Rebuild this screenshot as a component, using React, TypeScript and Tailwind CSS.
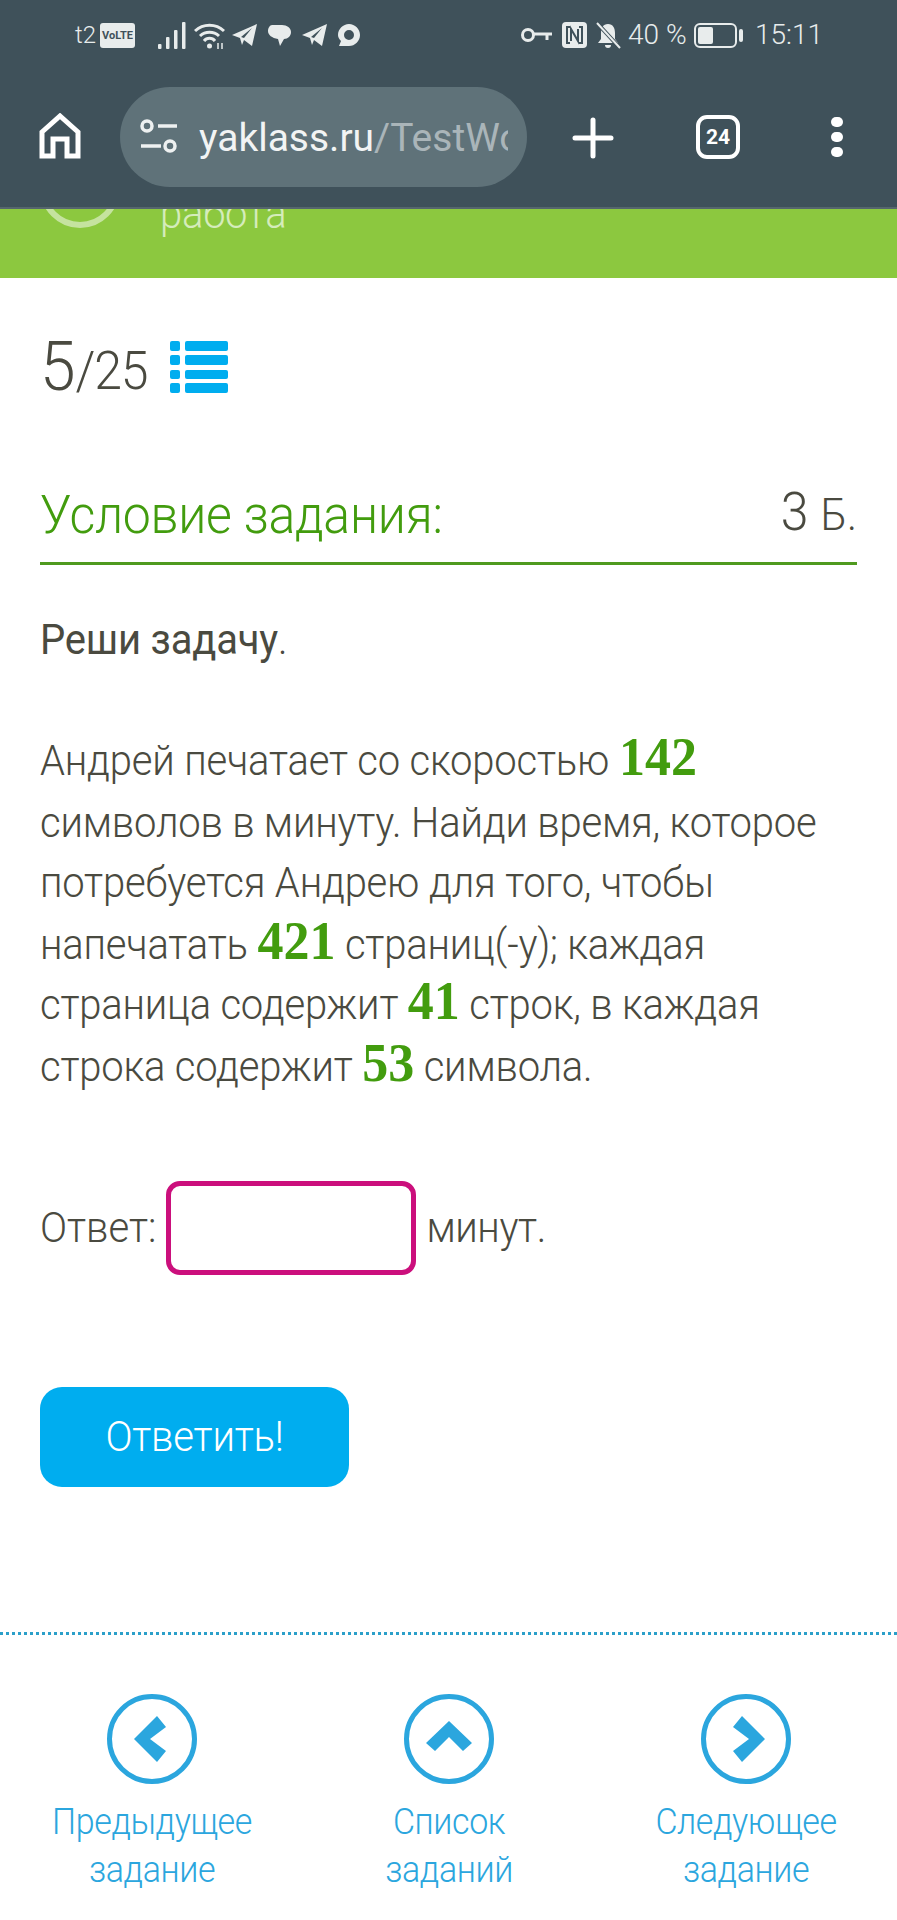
import React from 'react';

const Num = ({ children }: { children: React.ReactNode }) => (
  <span className="font-['Liberation_Serif',serif] font-bold text-[52px] tracking-normal leading-[0px] text-[#429c0e]">{children}</span>
);

function Telegram({ className }: { className?: string }) {
  return (
    <svg width="25" height="22" viewBox="0 0 25 22" fill="currentColor" className={className}>
      <path d="M25 0 20 22 12 16 10 21 8 14 0 11zM20 4 9 13l3 1z" fillRule="evenodd" />
    </svg>
  );
}

function StatusBar() {
  return (
    <div className="h-[69px] flex items-center pl-[75px] pt-[1px] text-[#e8ecec]">
      <span className="w-[20px] text-[24px] font-light leading-none">t2</span>
      <span className="ml-[5px] w-[35px] h-[25px] rounded-[3px] bg-[#e8ecec] text-[#3f515a] text-[11px] font-bold flex items-center justify-center leading-none">VoLTE</span>
      <svg width="28" height="27" viewBox="0 0 28 27" fill="currentColor" className="ml-[23px]">
        <rect x="0" y="22" width="3.5" height="5" rx="1" />
        <rect x="8" y="15" width="3.5" height="12" rx="1" />
        <rect x="16" y="8" width="3.5" height="19" rx="1" />
        <rect x="24" y="0" width="3.5" height="27" rx="1" />
      </svg>
      <svg width="31" height="27" viewBox="0 0 31 27" fill="none" stroke="currentColor" strokeWidth="3" className="ml-[8px]">
        <path d="M1 9a21 21 0 0 1 29 0M6 14a14 14 0 0 1 19 0M10 19a7 7 0 0 1 11 0" />
        <circle cx="15.5" cy="24" r="2.5" fill="currentColor" stroke="none" />
        <path d="M24 21v6M28 21v6" strokeWidth="1.5" />
      </svg>
      <Telegram className="ml-[7px]" />
      <svg width="23" height="22" viewBox="0 0 23 22" fill="currentColor" className="ml-[11px]">
        <path d="M4 1h10c5 0 9 3 9 7s-3 7-7 7l-4 7-2-7C4 14 0 11 0 7c0-3 2-6 4-6z" />
      </svg>
      <Telegram className="ml-[11px]" />
      <svg width="22" height="22" viewBox="0 0 22 22" fill="currentColor" fillRule="evenodd" className="ml-[11px]">
        <path d="M11 0c6 0 11 5 11 11s-5 11-11 11H1l2-5C1 15 0 13 0 11 0 5 5 0 11 0zm0 6a5 5 0 1 0 0 10 5 5 0 0 0 0-10z" />
      </svg>

      <svg width="31" height="14" viewBox="0 0 31 14" fill="none" stroke="currentColor" strokeWidth="3" className="ml-[161px]">
        <circle cx="7" cy="7" r="5.5" />
        <path d="M13 6h18M26 6v6" />
      </svg>
      <span className="ml-[10px] w-[25px] h-[26px] rounded-[4px] bg-[#e8ecec] flex items-center justify-center">
        <svg width="19" height="22" viewBox="0 0 19 22" fill="none" stroke="#3f515a" strokeWidth="2"><path d="M5 3H2v16h3M14 3h3v16h-3M6 17V5l7 12V5" /></svg>
      </span>
      <svg width="25" height="27" viewBox="0 0 25 27" className="ml-[9px]" fill="currentColor">
        <path d="M12 2c5 0 7 4 7 9v6l3 4H2l3-4v-6c0-5 2-9 7-9zM9 23h6a3 3 0 0 1-6 0z" />
        <path d="M1 1l23 25" stroke="#3f515a" strokeWidth="4" />
        <path d="M1 1l23 25" stroke="currentColor" strokeWidth="2" />
      </svg>
      <span className="ml-[7px] w-[59px] text-[28px] font-light leading-none whitespace-nowrap">40 %</span>
      <span className="ml-[7px] w-[43px] h-[25px] rounded-[6px] border-2 border-[#e8ecec] p-[2px] flex">
        <span className="w-[15px] bg-[#e8ecec] rounded-[2px]" />
      </span>
      <span className="ml-[2px] w-[4px] h-[13px] bg-[#e8ecec] rounded-full" />
      <span className="ml-[12px] text-[28px] font-light leading-none whitespace-nowrap">15:11</span>
    </div>
  );
}

function BrowserBar() {
  return (
    <div className="h-[138px] flex items-start pl-[39px] pt-[18px]">
      <svg width="42" height="46" viewBox="0 0 42 46" fill="none" stroke="white" strokeWidth="5" className="mt-[26px] shrink-0">
        <path d="M3 43V19L21 3l18 16v24H28V26H14v17H3z" />
      </svg>
      <div className="ml-[39px] w-[407px] h-[100px] shrink-0 rounded-[50px] bg-[#5f7279] flex items-center pl-[20px] overflow-hidden">
        <svg width="38" height="38" viewBox="0 0 38 38" fill="none" stroke="#eef1f1" strokeWidth="3.5" className="shrink-0">
          <circle cx="7" cy="8" r="5" />
          <path d="M18 8h19M1 28h20" />
          <circle cx="30" cy="28" r="5" />
        </svg>
        <div className="ml-[21px] mt-[2px] w-[309px] overflow-hidden whitespace-nowrap text-[39px] leading-[48px] text-[#f2f4f4] font-normal">
          yaklass.ru<span className="text-[#aab5b9]">/TestWork</span>
        </div>
      </div>
      <svg width="42" height="42" viewBox="0 0 42 42" fill="none" stroke="white" strokeWidth="5" strokeLinecap="round" className="ml-[45px] mt-[30px] shrink-0">
        <path d="M21 3v36M3 21h36" />
      </svg>
      <div className="ml-[82px] mt-[28px] w-[44px] h-[44px] shrink-0 border-[4px] border-white rounded-[11px] flex items-center justify-center text-white text-[21px] font-bold leading-none">24</div>
      <div className="ml-[91px] mt-[30px] flex flex-col gap-[5px] shrink-0">
        <span className="w-[12px] h-[10px] bg-white rounded-full" />
        <span className="w-[12px] h-[10px] bg-white rounded-full" />
        <span className="w-[12px] h-[10px] bg-white rounded-full" />
      </div>
    </div>
  );
}

function NavItem({ dir, lines }: { dir: 'left' | 'up' | 'right'; lines: [string, string] }) {
  const arrow = {
    left: '27,45 50,22 59,33 43,45 59,57 50,68',
    up: '45,27 68,49 59,57 45,43 31,57 22,49',
    right: '64,45 41,22 32,33 48,45 32,57 41,68',
  }[dir];
  return (
    <div className="w-[260px] flex flex-col items-center">
      <svg width="90" height="90" viewBox="0 0 90 90" fill="none">
        <circle cx="45" cy="45" r="42.5" stroke="#2ba6de" strokeWidth="5" />
        <polygon points={arrow} fill="#2ba6de" />
      </svg>
      <div className="mt-[14px] origin-top scale-y-110 text-center text-[34px] tracking-[-0.4px] leading-[43.2px] font-light text-[#2ba6de]">
        {lines[0]}
        <br />
        {lines[1]}
      </div>
    </div>
  );
}

export default function App() {
  return (
    <div className="w-[897px] h-[1920px] bg-white overflow-hidden font-['Roboto',sans-serif] text-[#4a4a40]">
      <div className="bg-[#3f515a] border-b-[2px] border-[#56666d]">
        <StatusBar />
        <BrowserBar />
      </div>

      <div className="h-[69px] bg-[#8cc83f] flex overflow-hidden">
        <div className="relative w-[80px] ml-[40px]">
          <div className="absolute -top-[61px] left-0 w-[80px] h-[80px] rounded-full border-[6px] border-[#c5e39f]" />
        </div>
        <div className="ml-[40px] -mt-[16px] origin-top scale-y-[1.07] text-[40px] tracking-[-0.2px] font-light leading-none text-[#d5ecbb]">работа</div>
      </div>

      <div className="px-[40px]">
        <div className="mt-[58px] flex items-center h-[64px]">
          <span className="inline-block scale-y-[1.06] text-[64px] font-light leading-none">5</span>
          <span className="inline-block scale-y-[1.07] text-[50px] tracking-[-1.2px] font-light leading-none mt-[6px]">/25</span>
          <svg width="58" height="52" viewBox="0 0 58 52" fill="#00adef" className="ml-[23px] -mt-[2px]">
            <rect x="0" y="0" width="10" height="10" rx="2" />
            <rect x="15" y="0" width="43" height="10" rx="2" />
            <rect x="0" y="14" width="10" height="10" rx="2" />
            <rect x="15" y="14" width="43" height="10" rx="2" />
            <rect x="0" y="29" width="10" height="9" rx="2" />
            <rect x="15" y="29" width="43" height="9" rx="2" />
            <rect x="0" y="42" width="10" height="10" rx="2" />
            <rect x="15" y="42" width="43" height="10" rx="2" />
          </svg>
        </div>

        <div className="mt-[81px] pb-[16px] border-b-[3px] border-[#4f9a1f] flex items-end justify-between">
          <span className="inline-block scale-y-[1.07] text-[50px] tracking-[-0.3px] leading-[62px] font-light text-[#429c0e]">Условие задания:</span>
          <span className="inline-block scale-y-[1.07] text-[50px] leading-[62px] font-light"><span>3</span> <span className="text-[42px]">Б.</span></span>
        </div>

        <div className="mt-[44px] origin-top scale-y-[1.06] text-[40px] tracking-[-0.2px] leading-[57.55px] font-light w-[820px]">
          <p><span className="font-normal">Реши задачу</span>.</p>
          <p className="mt-[57.55px]">
            Андрей печатает со скоростью <Num>142</Num> символов в минуту. Найди время, которое потребуется Андрею для того, чтобы напечатать <Num>421</Num> страниц(-у); каждая страница содержит <Num>41</Num> строк, в каждая строка содержит <Num>53</Num> символа.
          </p>
        </div>

        <div className="mt-[112px] flex items-center text-[40px] font-light leading-none">
          <span className="inline-block scale-y-[1.06]">Ответ:</span>
          <div className="ml-[10px] w-[250px] h-[94px] rounded-[14px] border-[5px] border-[#cb0f7c]" />
          <span className="inline-block scale-y-[1.06] tracking-[-0.4px] ml-[10px]">минут.</span>
        </div>

        <div className="mt-[112px] w-[309px] h-[100px] rounded-[22px] bg-[#00adef] flex items-center justify-center text-[40px] tracking-[-0.2px] font-light text-white">
          <span className="inline-block scale-y-[1.06]">Ответить!</span>
        </div>
      </div>

      <div className="mt-[145px] border-t-[3px] border-dotted border-[#2b9fc9]" />

      <div className="mt-[59px] pl-[22px] flex gap-[37px]">
        <NavItem dir="left" lines={['Предыдущее', 'задание']} />
        <NavItem dir="up" lines={['Список', 'заданий']} />
        <NavItem dir="right" lines={['Следующее', 'задание']} />
      </div>
    </div>
  );
}
